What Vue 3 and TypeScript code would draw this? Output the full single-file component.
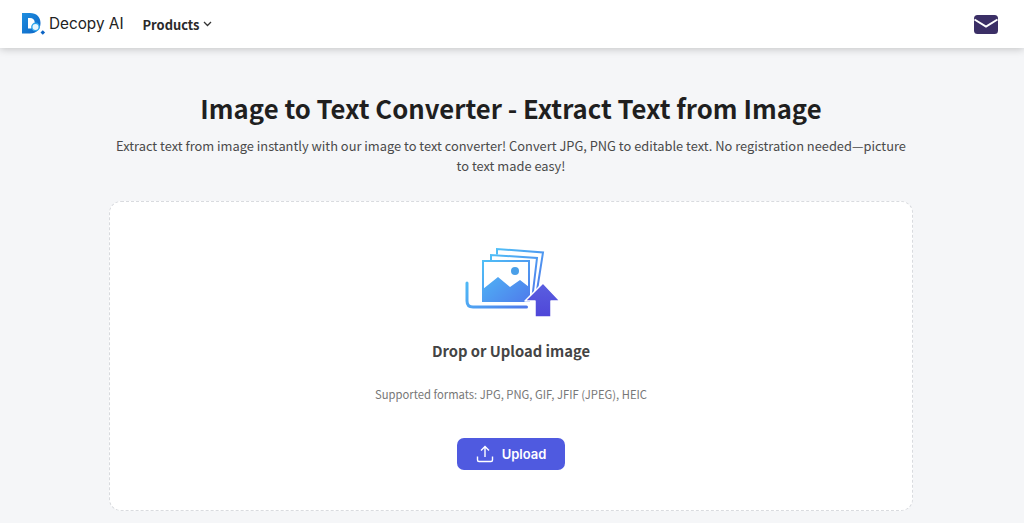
<template>
  <div class="page">
    <header class="top-bar">
      <div class="top-left">
        <a class="brand">
          <svg class="brand-logo" width="25" height="24" viewBox="0 0 25 24" aria-hidden="true">
            <defs>
              <linearGradient id="logoGrad" x1="0" y1="0" x2="1" y2="1">
                <stop offset="0" stop-color="#1f8fe0" />
                <stop offset="1" stop-color="#0b63c4" />
              </linearGradient>
            </defs>
            <path fill-rule="evenodd" fill="url(#logoGrad)" d="M0 1h8c6.500 0 10.500 4 10.500 10s-4 10.500-10.500 10.500H0V1zm6 5v10.500h2c2.800 0 4.800-2.200 4.800-5.500S10.800 6 8 6H6z" />
            <circle cx="13.500" cy="15" r="3.700" fill="#e8f5fd" stroke="#2fa4ec" stroke-width="1.400" />
            <path d="M18.500 20.500l2.300-2.300 2.300 2.300-2.300 2.300z" fill="#0b63c4" />
          </svg>
          <span class="brand-name">Decopy AI</span>
        </a>
        <nav class="nav">
          <span class="nav-item">Products</span>
          <svg width="9" height="6" viewBox="0 0 9 6" aria-hidden="true">
            <path d="M1 1l3.500 3.500L8 1" fill="none" stroke="#333" stroke-width="1.300" />
          </svg>
        </nav>
      </div>
      <svg class="mail" width="24" height="19" viewBox="0 0 24 19" aria-hidden="true">
        <rect width="24" height="19" rx="3.500" fill="#3b2f66" />
        <path d="M0.500 4.500l11.500 7 11.500-7" fill="none" stroke="#fff" stroke-width="2" />
      </svg>
    </header>

    <main class="content">
      <h1 class="title">Image to Text Converter - Extract Text from Image</h1>
      <p class="subtitle">
        Extract text from image instantly with our image to text converter! Convert JPG, PNG to editable text. No registration needed—picture to text made easy!
      </p>

      <section class="drop-zone">
        <svg class="upload-art" width="96" height="72" viewBox="0 0 96 72" aria-hidden="true">
          <defs>
            <linearGradient id="artGrad" gradientUnits="userSpaceOnUse" x1="20" y1="5" x2="70" y2="60">
              <stop offset="0" stop-color="#4fc6f8" />
              <stop offset="1" stop-color="#4f74ea" />
            </linearGradient>
            <linearGradient id="arrowGrad" x1="0" y1="0" x2="0" y2="1">
              <stop offset="0" stop-color="#5a5fe0" />
              <stop offset="1" stop-color="#4f46d8" />
            </linearGradient>
          </defs>
          <path d="M33 8.500V3l46 3.500-6.500 41" fill="none" stroke="url(#artGrad)" stroke-width="2" />
          <path d="M27 14V9l46 3-5 42" fill="none" stroke="url(#artGrad)" stroke-width="2" />
          <rect x="19" y="15" width="46" height="40" fill="#fff" stroke="url(#artGrad)" stroke-width="2" />
          <circle cx="51" cy="25" r="4" fill="#4a9fe8" />
          <path d="M19 43l15-12 12 10 10-7 9 7v14H19z" fill="url(#artGrad)" />
          <path d="M3 37v18c0 4 2 6 6 6h53.500" fill="none" stroke="url(#artGrad)" stroke-width="3" stroke-linecap="round" />
          <path d="M79 37l17 18H87v16H71V55H61z" fill="url(#arrowGrad)" stroke="#fff" stroke-width="1.500" stroke-linejoin="round" />
        </svg>

        <h2 class="drop-label">Drop or Upload image</h2>
        <p class="formats">Supported formats: JPG, PNG, GIF, JFIF (JPEG), HEIC</p>

        <button class="upload-btn" type="button">
          <svg width="18" height="18" viewBox="0 0 18 18" aria-hidden="true">
            <path d="M9 12V2M5 5.500L9 1.500l4 4M1.500 11.500v3.500c0 .800.700 1.500 1.500 1.500h12c.800 0 1.500-.700 1.500-1.500v-3.500" fill="none" stroke="#fff" stroke-width="1.400" />
          </svg>
          <span>Upload</span>
        </button>
      </section>
    </main>
  </div>
</template>

<script setup lang="ts">
</script>

<style>
html, body { margin: 0; background: #f5f6f8; }
</style>

<style scoped>
.page {
  height: 523px;
  overflow: hidden;
  background: #f5f6f8;
  font-family: "Noto Sans CJK SC", "Noto Sans", sans-serif;
}

.top-bar {
  height: 48px;
  box-sizing: border-box;
  display: flex;
  align-items: center;
  justify-content: space-between;
  padding: 0 26px 0 22px;
  background: #fff;
  box-shadow: 0 1px 8px rgba(0,0,0,0.22);
}
.top-left {
  display: flex;
  align-items: center;
  gap: 19px;
}
.brand {
  display: flex;
  align-items: center;
  gap: 2px;
}
.brand-name {
  font-family: Inter, sans-serif;
  font-size: 15.300px;
  color: #222;
  position: relative;
  top: -1px;
}
.nav {
  display: flex;
  align-items: center;
  gap: 4px;
}
.nav-item {
  font-size: 12.900px;
  font-weight: 700;
  color: #2a2a2a;
}

.content {
  display: flex;
  flex-direction: column;
  align-items: center;
  padding-right: 2px;
}
.title {
  margin: 42px 0 0;
  font-size: 25.700px;
  line-height: 36px;
  font-weight: 700;
  color: #1f1f1f;
}
.subtitle {
  width: 795px;
  margin: 10px 0 0;
  font-size: 12.850px;
  line-height: 20px;
  color: #4a4a4a;
  text-align: center;
}

.drop-zone {
  width: 804px;
  height: 310px;
  box-sizing: border-box;
  margin-top: 25px;
  display: flex;
  flex-direction: column;
  align-items: center;
  background: #fff;
  border: 1px dashed #d9dbdf;
  border-radius: 12px;
}
.upload-art {
  margin-top: 44px;
  margin-left: 2px;
}
.drop-label {
  margin: 21px 0 0;
  font-size: 14.750px;
  line-height: 24px;
  font-weight: 700;
  color: #444;
}
.formats {
  margin: 22px 0 0;
  font-size: 11.250px;
  line-height: 18px;
  color: #777;
}
.upload-btn {
  width: 108px;
  height: 32px;
  margin-top: 35px;
  display: flex;
  align-items: center;
  justify-content: center;
  gap: 8px;
  border: none;
  border-radius: 7px;
  background: #4f5ae0;
  color: #fff;
  font-family: Inter, sans-serif;
  font-size: 13px;
  font-weight: 600;
}
</style>
